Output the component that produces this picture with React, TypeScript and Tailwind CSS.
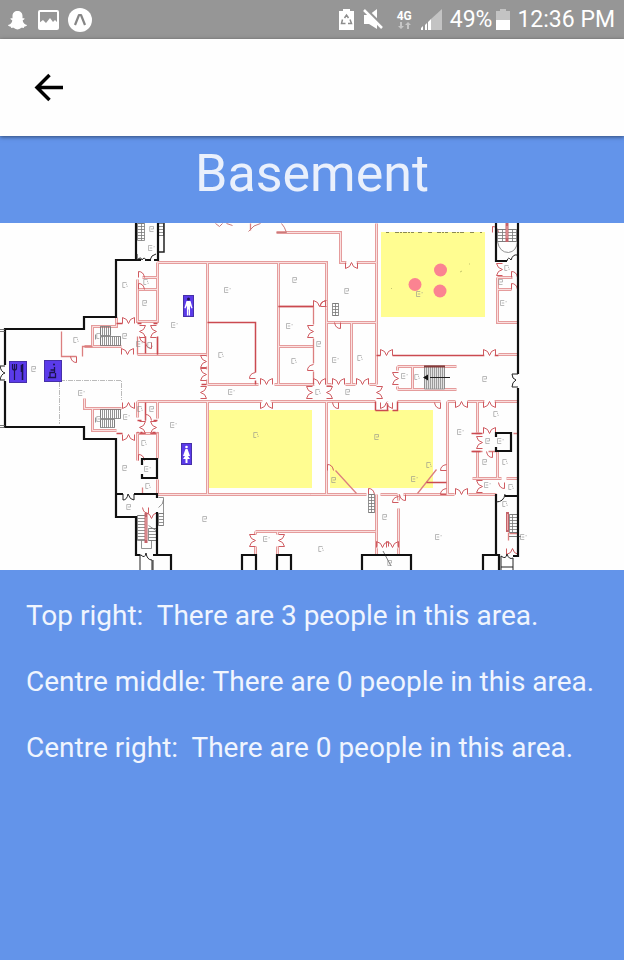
import React from "react";

type Mark = [number, number];
type Door = [number, number, number];

/* Structural outer walls */
const OUTER =
  "M5 365V329H84V317H116V260H136V223M5 381V427H84V439H116V517H136V555H140 M116 260H141M145 260H151 M154 260H158V223 " +
  "M116 494H123M134 494H157V498 M157 512V555H153M157 555H171V570 M140 555H137 M142 465V459H157V478H142V474 " +
  "M242 570V555H256V570M277 570V555H291V570 M362 570V555H411V570 M483 570V555H498M483 555H499V570 " +
  "M496 223V261H507 M518 223V374M518 388V556H513 M496 494V555 M496 437V433H511V451H496V447 M505 496H518";

/* Partition walls drawn as a double line */
const PARTITIONS =
  "M276 232H340V262H346 M356 262H376V223 M157 262H326V309 M157 262V277H142 M137 279V321H157V277M137 289H157 " +
  "M207 262V384 M278 262V384 M207 384H258M274 384H314M137 354H206 " +
  "M326 309V384M326 322H376 M351 322V384 M376 262V384 M326 384H331M345 384H355M369 384H376 M278 346H313 " +
  "M397 366H456M397 389H456 M397 366V370M397 386V389 M412 366V389 " +
  "M497 277V322H517M497 277H512M497 289H511 M498 354H517 " +
  "M84 346H92V326H116V317 M92 346H121 " +
  "M84 398V408H121M92 408V430H116M137 401H262M270 401H375M397 401H440M447 401H455M467 401H484M494 401H517 " +
  "M137 401V417M157 401V418M137 460V433H157V458 M157 479V494H310 M207 401V494 M326 401V494 M310 494H366M380 494H397M403 494H454M468 494H496 " +
  "M447 401V494 M477 401V432 M477 451V477 M472 478H501M497 451V478M506 478H517 " +
  "M376 494V554M398 494V500M398 508V554 M255 531H375 M255 531V534M277 531V534 M255 546V555M277 546V555";

const THIN_RED =
  "M61 331V356H76M82 356V346H92 M278 306H313V324M313 338V363M313 371V384 M137 336V354M157 336V354 " +
  "M142 487V493 M335 470L356 493 M417 493L436 469 " +
  "M475 433H480M513 433H517 M472 451H482M488 451H497 M157 512V525 M508 532V540 M509 533H517 M250 223V230";

const BOLD_RED =
  "M207 322H255V372M255 380V384M278 306H313M426 482H446M145 336V353M157 336V354M145 402V420M137 323H141M153 323H157M137 420H141M153 420H157M137 432H142M152 432H157 M116 323H122M116 433H122 M375 410H388M387 401V410M375 401V410M397 401V410H392 M376 355H380 M392 355H484 M494 355H498 M201 384H206 M471 433H482M471 451H480";

const PAIRS: Door[] = [
  [128, 323, 0], [127, 354, 0], [319, 384, 0], [266, 384, 0], [338, 384, 0], [362, 384, 0],
  [386, 355, 0], [489, 355, 0], [489, 433, 0], [461, 494, 0], [319, 306, 0],
  [351, 262, 180], [266, 402, 180], [461, 401, 180], [489, 401, 180], [386, 402, 180], [128, 402, 180], [128, 434, 180],
  [206, 361, 270], [206, 374, 270], [313, 331, 270], [398, 378, 270], [482, 442, 270], [482, 486, 270], [502, 269, 270],
  [200, 392, 90], [278, 540, 90], [255, 540, 270], [326, 392, 90], [312, 392, 270], [376, 392, 90],
  [139, 331, 90], [156, 331, 270], [139, 427, 90], [156, 427, 270], [151, 518, 0], [382, 547, 0], [392, 547, 0], [512, 548, 180],
];

const SINGLES: Door[] = [
  [138, 277, 0], [138, 289, 0], [76, 356, 180], [492, 232, 0], [255, 378, 270], [313, 370, 270],
  [326, 306, 270], [340, 322, 180], [511, 277, 0], [511, 289, 0], [327, 470, 0], [446, 470, 270],
  [338, 402, 180], [440, 402, 180], [368, 494, 0], [446, 494, 270], [405, 494, 180], [398, 502, 270],
  [492, 451, 180], [138, 460, 0], [504, 482, 180], [148, 507, 180], [145, 420, 0], [145, 336, 180], [151, 342, 180],
];

const LABELS: Mark[] = [
  [124, 285], [151, 229], [151, 248], [145, 282], [144, 303], [174, 325], [75, 340], [124, 336], [139, 344], [149, 345],
  [33, 369], [81, 393], [98, 336], [98, 419], [126, 417], [139, 409], [151, 409], [173, 425], [143, 443], [124, 468], [147, 469], [147, 486], [128, 507],
  [227, 290], [220, 355], [294, 280], [289, 326], [293, 361], [318, 344], [231, 392], [317, 392], [346, 291], [335, 360],
  [359, 358], [347, 392], [404, 376], [416, 377], [484, 379], [419, 294], [506, 268], [500, 282], [503, 303],
  [255, 435], [376, 437], [460, 432], [495, 414], [487, 441], [500, 441], [504, 462], [484, 462], [487, 485], [510, 487],
  [333, 480], [414, 479], [428, 465], [204, 519], [266, 539], [320, 549], [384, 517], [438, 537], [504, 504], [389, 563], [523, 537],
];

function Stairs({ x, y, w, h, step, vertical }: { x: number; y: number; w: number; h: number; step: number; vertical?: boolean }) {
  const count = Math.floor((vertical ? w : h) / step) + 1;
  const lines = Array.from({ length: count }, (_, i) =>
    vertical ? `M${x + i * step} ${y}v${h}` : `M${x} ${y + i * step}h${w}`
  ).join("");
  return <path d={`${lines}M${x} ${y}h${w}v${h}h${-w}z`} />;
}

function FloorPlan() {
  return (
    <svg viewBox="0 223 624 347" className="block w-full bg-[#fefefe]" role="img" aria-label="Basement floor plan" fill="none">
      <g fill="#fffd91">
        <rect x="381" y="232" width="104" height="85" />
        <rect x="208" y="410" width="104" height="78" />
        <rect x="330" y="410" width="103" height="78" />
      </g>
      <path d="M386 232.500h3m6 0h19m4 0h4m6 0h4m5 0h11m4 0h13m5 0h5m5 0h2" stroke="#8c8a50" strokeWidth="1" strokeDasharray="4 1 2 1" />

      <g transform="translate(0.5 0.5)">
        <path d={PARTITIONS} stroke="#e59c9c" strokeWidth="3" />
        <path d={PARTITIONS} stroke="#fae0e0" strokeWidth="1" />
        <path d={THIN_RED} stroke="#dc7f7f" strokeWidth="1.300" />
        <path d={BOLD_RED} stroke="#cb4a50" strokeWidth="1.500" />
        <path d="M248 231Q253 224 260 223M276 232H286Q284 226 281 223M215 223l4 3 3-3M226 223l6 2" stroke="#c97a7a" strokeWidth="1" />
      </g>

      <g stroke="#cf5a60" strokeWidth="1" transform="translate(0.5 0.5)">
        {PAIRS.map(([x, y, r], i) => (
          <g key={i} transform={`translate(${x} ${y}) rotate(${r})`}>
            <path d="M-5 0H5" stroke="#fefefe" strokeWidth="2" />
            <path d="M-6 0V-6Q-1 -5 0 0Q1 -5 6 -6V0" />
          </g>
        ))}
        {SINGLES.map(([x, y, r], i) => (
          <path key={i} transform={`translate(${x} ${y}) rotate(${r})`} d="M0 0V-6Q5 -6 6 0" />
        ))}
      </g>

      <g stroke="#777" strokeWidth="0.800" transform="translate(0.5 0.5)">
        <Stairs x={137} y={223} w={7} h={17} step={3} />
        <path d="M141 223v17" />
        <Stairs x={158} y={223} w={5} h={12} step={3} />
        <Stairs x={100} y={326} w={10} h={9} step={2} vertical />
        <Stairs x={100} y={336} w={20} h={9} step={2} vertical />
        <Stairs x={100} y={409} w={20} h={9} step={2} vertical />
        <Stairs x={100} y={419} w={14} h={8} step={2} vertical />
        <Stairs x={332} y={303} w={6} h={12} step={3} />
        <path d="M335 303v12" />
        <Stairs x={497} y={229} w={19} h={12} step={3} />
        <path d="M502 229v12M512 229v12" />
        <Stairs x={368} y={494} w={6} h={18} step={3} />
        <path d="M371 494v18" />
        <Stairs x={137} y={515} w={8} h={25} step={3} />
        <Stairs x={148} y={528} w={8} h={12} step={3} />
        <Stairs x={158} y={513} w={5} h={12} step={3} />
        <Stairs x={509} y={514} w={8} h={18} step={3} />
        <path d="M512 514v18M141 540V548H151V540M148 525l9 6M497 241Q499 252 508 252Q516 251 517 241M158 497h5v17M158 507q5-3 5-8M95 339v-5M95 417v5" />
      </g>
      <path d="M164 223V252H159" stroke="#222" strokeWidth="1.500" />
      <g>
        <rect x="424" y="366" width="21" height="23" fill="#e2e2e2" />
        <g stroke="#8a8a8a" strokeWidth="0.800" transform="translate(0.5 0)"><Stairs x={424} y={366} w={20} h={23} step={2} vertical /></g>
        <path d="M424 366.500H445" stroke="#843b3b" strokeWidth="2" />
        <path d="M430 377.500H450" stroke="#222" strokeWidth="1" />
        <path d="M423 377.500L428 374.500V380.500Z" fill="#111" />
      </g>
      <path d="M507 223V242M146 513V543M507.500 512V532" stroke="#c4636a" strokeWidth="3" />
      <path d="M507 226V238M146 517V540M507.500 514V530" stroke="#ecadad" strokeWidth="1" />

      <path d="M60 380.500H121.500V400M59.500 382V424" stroke="#bbb" strokeWidth="1" strokeDasharray="5 1 1 1" />
      <path d={OUTER} stroke="#111" strokeWidth="2.200" />
      <path d="M0 329.500H5M0 331.500H5M0 425.500H5M0 427.500H5" stroke="#555" strokeWidth="0.800" />
      <g stroke="#222" strokeWidth="1">
        <path d="M5 366H0Q1 372 5 373Q1 374 0 380H5M518 374H512Q512 379 516 380Q512 382 512 387H518" />
        <path d="M137 254V260Q141 256 142 260Q144 256 147 261M150 260Q151 255 156 254M507 261Q508 256 511 260Q513 254 517 255" />
        <path d="M123 494V500Q127 500 128 494Q130 500 134 500V494M140 570V555H141Q145 559 146 553Q147 560 152 560V570M153 560V570" />
        <path d="M496 502Q504 502 505 494M501 570V556Q506 560 507 554Q509 560 513 558V570M501 567H513" />
        <path d="M383 551L391 566M509 536.500H521" strokeWidth="0.600" />
      </g>

      <g stroke="#8c8c8c" strokeWidth="0.600" opacity="0.800">
        {LABELS.map(([x, y], i) => (
          <path key={i} transform={`translate(${x} ${y}) scale(1.25)`} d={i % 3 === 0 ? "M2 -2H-1V2H1M2 1H3M2 -1V0" : i % 3 === 1 ? "M-1 -2V2H2M-1 -2H2V0H0" : "M-2 -2H1M-2 -2V2H1M2 -1H3M-1 0H1"} />
        ))}
      </g>
      <path d="M391 288l1 1M460 272l2-1M469 264h1" stroke="#c5c56c" />

      <g fill="#fb8391">
        <circle cx="440.500" cy="270" r="6.500" />
        <circle cx="415" cy="284.500" r="6.500" />
        <circle cx="440" cy="291" r="6.500" />
      </g>

      <g fill="#5b3bea" stroke="#4630a8" strokeWidth="1">
        <rect x="9.500" y="361.500" width="17" height="21" />
        <rect x="44.500" y="360.500" width="17" height="21" />
        <rect x="183.500" y="295.500" width="10" height="21" />
        <rect x="181.500" y="443.500" width="10" height="21" />
      </g>
      <g stroke="#1c1450">
        <path d="M12.500 364v4q0 2 2 2t2-2v-4M14.500 364v16" strokeWidth="1.200" />
        <path d="M22.500 364v16M21.500 365v7" strokeWidth="1.600" />
        <path d="M54.500 367v5.500h-4.500v5h-2M55.500 373v4.500h-5.500M54 370h-3.500" strokeWidth="1.300" />
        <circle cx="54" cy="364.500" r="1" fill="#1c1450" stroke="none" />
      </g>
      <circle cx="188.500" cy="299" r="1.500" fill="#1c1450" />
      <path d="M186.500 301h4l2 7-1 .5-1.500-3v10h-1.300v-6h-.5v6h-1.300v-10l-1.500 3-1-.5z" fill="#fff" />
      <circle cx="186.500" cy="447" r="1.300" fill="#fff" />
      <path d="M185.500 449h2l2.500 7h-2l2 3h-2.500v4h-2v-4H183l2-3h-2z" fill="#fff" />
    </svg>
  );
}

function StatusBar() {
  return (
    <div className="flex h-[39px] items-center justify-between bg-[#969696] pr-[9px] pl-2 text-white">
      <div className="flex items-center gap-[9px]">
        <svg className="h-[20px] w-[19px]" viewBox="0 0 19 20" fill="currentColor" role="img" aria-label="Snapchat">
          <path d="M9.500 1C6.500 1 4.500 3 4.500 6v2.200c-.8.2-1.800-.4-2 .4-.2.8 1.400 1.200 1.800 1.800C4.300 12.500 2 14.500 0 15c-.2 1.200 2 1.400 2.800 1.700.2.600.2 1 .6 1.200.8.200 1.900-.4 3 .3 1 .6 1.800 1.200 3.100 1.200s2.100-.6 3.100-1.200c1.100-.7 2.200-.1 3-.3.400-.2.400-.6.6-1.200.8-.3 3-.5 2.800-1.700-2-.5-4.300-2.500-4.300-4.600.4-.6 2-1 1.800-1.800-.2-.8-1.200-.2-2-.4V6c0-3-2-5-5-5z" />
        </svg>
        <svg className="ml-[2px] h-[20px] w-[21px]" viewBox="0 0 21 20" role="img" aria-label="Picture">
          <rect x="1" y="1" width="19" height="18" rx="1" fill="none" stroke="currentColor" strokeWidth="2" />
          <path d="M1 13l4-3 3 3 4-5 3 4 2-2 3 3v6H1z" fill="currentColor" />
        </svg>
        <svg className="h-[24px] w-[24px]" viewBox="0 0 24 24" role="img" aria-label="Expo">
          <circle cx="12" cy="12" r="12" fill="currentColor" />
          <path d="M7 17l4-10h2l4 10" fill="none" stroke="#858585" strokeWidth="2.200" strokeLinejoin="round" />
        </svg>
      </div>
      <div className="flex items-center">
        <svg className="h-[21px] w-[15px]" viewBox="0 0 15 21" role="img" aria-label="Battery saver">
          <path d="M4 0h7v2h4v19H0V2h4z" fill="currentColor" />
          <path d="M5.500 9l2-3 2 3M11 10.500l1.500 4H9M3.500 10.500L2.500 14.500H6.500" fill="none" stroke="#8c8c8c" strokeWidth="1.500" />
        </svg>
        <svg className="ml-[9px] h-[21px] w-[21px]" viewBox="0 0 21 21" role="img" aria-label="Muted">
          <path d="M1 6h5l8-6v20L6 15H1z" fill="currentColor" />
          <path d="M3 0l18 18" stroke="#969696" strokeWidth="2.500" />
          <path d="M1 1l18 18" stroke="currentColor" strokeWidth="2.500" />
        </svg>
        <div className="ml-[13px] flex flex-col items-center">
          <span className="text-[12px] leading-[12px] font-bold">4G</span>
          <svg className="h-[7px] w-[13px]" viewBox="0 0 13 7" fill="#c6c6c6" aria-hidden="true">
            <path d="M2 0h2v4h2L3 7 0 4h2zM9 7h2V3h2L10 0 7 3h2z" />
          </svg>
        </div>
        <svg className="ml-[9px] h-[21px] w-[21px]" viewBox="0 0 21 21" role="img" aria-label="Signal">
          <path d="M10 21V10L21 0v21z" fill="#c3c3c3" />
          <path d="M0 21v-2l2-2v4zM4 21v-5l2-2v7zM7 21v-8l3-3v11z" fill="currentColor" />
        </svg>
        <span className="ml-[8px] text-[23px] leading-7">49%</span>
        <svg className="ml-[4px] h-[21px] w-[14px]" viewBox="0 0 14 21" role="img" aria-label="Battery">
          <path d="M4 0h6v2h4v19H0V2h4z" fill="#c3c3c3" />
          <path d="M0 11h14v10H0z" fill="currentColor" />
        </svg>
        <span className="ml-[7px] text-[23px] leading-7">12:36 PM</span>
      </div>
    </div>
  );
}

const areas = [
  "Top right:  There are 3 people in this area.",
  "Centre middle: There are 0 people in this area.",
  "Centre right:  There are 0 people in this area.",
];

export default function App() {
  return (
    <div className="min-h-screen bg-[#6394ea] font-['Roboto',sans-serif]">
      <StatusBar />
      <header className="relative flex h-[97px] items-center bg-[#fefefe] px-8 shadow-[0_1px_4px_rgba(0,0,0,0.5)]">
        <button type="button" aria-label="Back" className="text-black">
          <svg className="h-8 w-8" viewBox="0 0 32 32" fill="none" stroke="currentColor" strokeWidth="3.500">
            <path d="M31 15.500H5M17.500 3L5 15.500L17.500 28" />
          </svg>
        </button>
      </header>
      <main>
        <h1 className="pt-[6px] pb-[17px] text-center text-[52px] leading-[64px] text-[#eaf0fc]">Basement</h1>
        <FloorPlan />
        <div className="flex flex-col gap-[33px] px-[26px] py-[29px] text-[28px] leading-[33px] whitespace-pre-wrap text-[#f0f5fe]">
          {areas.map((a) => (
            <p key={a}>{a}</p>
          ))}
        </div>
      </main>
    </div>
  );
}
